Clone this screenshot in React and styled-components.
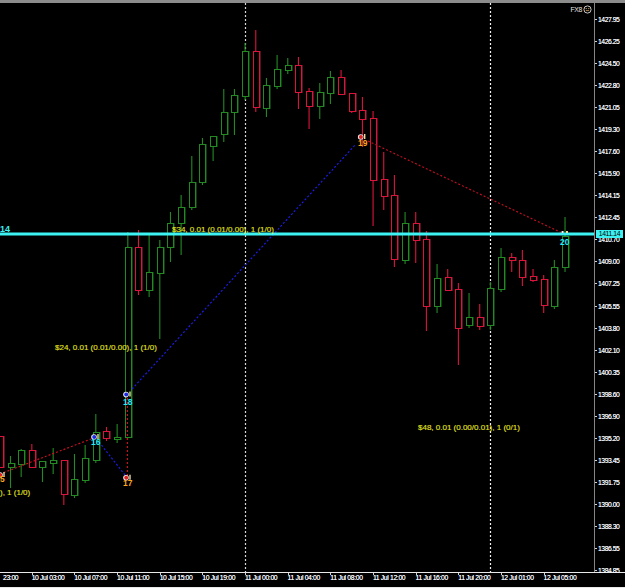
import styled, { createGlobalStyle } from "styled-components";

const GREEN = "#238a23";
const GREEN_DARK = "#0f3a11";
const RED = "#dc143c";
const RED_DARK = "#561022";
const CYAN = "#3df2f2";

const STEP = 10.664;
const FIRST_X = 10.5;

// g / r, wick top, body top, body bottom, wick bottom
const candles = [
  ["r", 436, 436, 467, 467],
  ["g", 456, 463, 467, 488],
  ["g", 449, 450, 464, 477],
  ["r", 444, 450, 467, 468],
  ["g", 461, 461, 467, 482],
  ["g", 448, 460, 463, 474],
  ["r", 460, 460, 494, 505],
  ["g", 454, 479, 495, 498],
  ["g", 445, 458, 480, 483],
  ["g", 414, 432, 460, 463],
  ["r", 427, 431, 438, 441],
  ["g", 424, 437, 439, 443],
  ["g", 232, 247, 437, 437],
  ["r", 230, 247, 290, 295],
  ["g", 235, 272, 290, 297],
  ["g", 240, 247, 273, 339],
  ["g", 212, 223, 247, 262],
  ["g", 195, 207, 223, 255],
  ["g", 156, 182, 207, 210],
  ["g", 138, 144, 182, 185],
  ["g", 136, 136, 146, 161],
  ["g", 89, 112, 134, 142],
  ["g", 89, 95, 112, 135],
  ["g", 43, 51, 96, 100],
  ["r", 30, 51, 107, 112],
  ["g", 78, 85, 108, 117],
  ["g", 55, 69, 86, 89],
  ["g", 58, 65, 70, 74],
  ["r", 57, 65, 92, 109],
  ["r", 88, 91, 106, 129],
  ["g", 83, 92, 106, 119],
  ["g", 71, 77, 93, 104],
  ["r", 70, 77, 94, 95],
  ["r", 93, 93, 111, 113],
  ["r", 97, 110, 119, 147],
  ["r", 111, 118, 180, 226],
  ["r", 152, 179, 196, 210],
  ["r", 175, 195, 259, 267],
  ["g", 212, 223, 260, 264],
  ["r", 212, 223, 240, 263],
  ["r", 231, 239, 306, 331],
  ["g", 264, 278, 306, 313],
  ["r", 269, 277, 290, 290],
  ["r", 283, 289, 328, 365],
  ["g", 293, 317, 325, 328],
  ["r", 304, 317, 326, 330],
  ["g", 282, 288, 325, 330],
  ["g", 248, 257, 289, 292],
  ["r", 253, 257, 260, 272],
  ["r", 250, 260, 277, 286],
  ["r", 269, 276, 280, 282],
  ["r", 275, 279, 305, 313],
  ["g", 260, 267, 306, 309],
  ["g", 217, 236, 267, 272],
];

const prices = [
  "1427.95", "1426.25", "1424.50", "1422.80", "1421.05", "1419.30", "1417.60",
  "1415.90", "1414.15", "1412.45", "1410.70", "1409.00", "1407.25", "1405.55",
  "1403.80", "1402.10", "1400.35", "1398.60", "1396.90", "1395.20", "1393.45",
  "1391.75", "1390.00", "1388.30", "1386.55", "1384.85",
];

const times = [
  "23:00", "10 Jul 03:00", "10 Jul 07:00", "10 Jul 11:00", "10 Jul 15:00",
  "10 Jul 19:00", "11 Jul 00:00", "11 Jul 04:00", "11 Jul 08:00", "11 Jul 12:00",
  "11 Jul 16:00", "11 Jul 20:00", "12 Jul 01:00", "12 Jul 05:00",
];

const GlobalStyle = createGlobalStyle`
  html, body {
    margin: 0;
    background: #000;
    overflow: hidden;
  }
`;

const Terminal = styled.div`
  width: 625px;
  height: 588px;
  background: #000;
  display: flex;
  flex-direction: column;
  font-family: "Liberation Sans", Arial, sans-serif;
`;

const TopBar = styled.div`
  height: 3px;
  flex: none;
  background: #8c8c8c;
`;

const ChartRow = styled.div`
  display: flex;
  height: 569px;
  flex: none;
`;

const ChartPane = styled.div`
  width: 594px;
  flex: none;
  position: relative;
  overflow: hidden;
`;

const ChartSvg = styled.svg`
  display: block;
  width: 594px;
  height: 569px;
`;

const TradeLabel = styled.text`
  font-size: 8px;
  fill: #e6e620;
  stroke: #e6e620;
  stroke-width: 0.12px;
`;

const OrderNumber = styled.text`
  font-size: 8.4px;
  font-weight: bold;
  fill: ${(p) => (p.$buy ? "#25ecfa" : "#ffa51e")};
`;

const LineLabel = styled.text`
  font-size: 9px;
  font-weight: bold;
  fill: ${CYAN};
`;

const Broker = styled.div`
  position: absolute;
  right: 2px;
  top: 2px;
  display: flex;
  align-items: center;
  gap: 1px;
  font-size: 6.8px;
  letter-spacing: -0.3px;
  line-height: 8px;
  color: #e8e4e0;
`;

const PriceAxis = styled.div`
  flex: 1;
  border-left: 1.5px solid #858585;
  padding-top: 5.6px;
  position: relative;
`;

const PriceRow = styled.div`
  height: 22.04px;
  display: flex;
  align-items: center;
  gap: 1px;
  font-size: 6.8px;
  letter-spacing: -0.45px;
  color: #f6f8fa;
  text-shadow: 0 0 0.4px #dfe8ff;

  &::before {
    content: "";
    width: 2px;
    height: 1px;
    background: #d0d0d0;
  }
`;

const PriceTag = styled.div`
  position: absolute;
  left: 1px;
  top: 227px;
  width: 27px;
  height: 8px;
  background: ${CYAN};
  color: #000;
  font-size: 6.8px;
  letter-spacing: -0.4px;
  line-height: 8px;
  text-align: center;
`;

const TimeAxis = styled.div`
  height: 14px;
  flex: none;
  border-top: 1px solid #e8e8e8;
  border-bottom: 1px solid #e8e8e8;
  overflow: hidden;
`;

const TimeTrack = styled.div`
  display: flex;
  height: 14px;
`;

const FirstCell = styled.div`
  flex: 0 0 31.67px;
  padding: 1px 0 0 3px;
  box-sizing: border-box;
  font-size: 6.8px;
  letter-spacing: -0.35px;
  line-height: 8px;
  color: #f6f8fa;
  text-shadow: 0 0 0.4px #dfe8ff;
`;

const TimeCell = styled.div`
  flex: 0 0 42.67px;
  position: relative;
  padding-top: 1px;
  font-size: 6.8px;
  letter-spacing: -0.35px;
  line-height: 8px;
  white-space: nowrap;
  color: #f6f8fa;
  text-shadow: 0 0 0.4px #dfe8ff;

  &::before {
    content: "";
    position: absolute;
    left: 0;
    top: 0;
    width: 1px;
    height: 2px;
    background: #d0d0d0;
  }
`;

function Candle({ index, kind, wickTop, bodyTop, bodyBottom, wickBottom }) {
  const x = FIRST_X + (index - 1) * STEP;
  const left = Math.round(x - 3) + 0.5;
  const color = kind === "g" ? GREEN : RED;
  const dark = kind === "g" ? GREEN_DARK : RED_DARK;
  return (
    <g>
      <line x1={x} x2={x} y1={wickTop} y2={wickBottom} stroke={color} strokeWidth={1.1} />
      <rect x={left} y={bodyTop + 0.5} width={6} height={bodyBottom - bodyTop} fill="#000" stroke={color} />
      <line x1={left + 7} x2={left + 7} y1={bodyTop} y2={bodyBottom + 1} stroke={dark} />
    </g>
  );
}

function Marker({ x, y, color }) {
  return (
    <g>
      <circle cx={x} cy={y} r={2.8} fill="#eef0f4" />
      <circle cx={x + 0.2} cy={y} r={2} fill={color} />
      <line x1={x + 4} x2={x + 4} y1={y - 3} y2={y + 2} stroke="#f0dca0" strokeWidth={1.4} />
    </g>
  );
}

function Dotted({ x1, y1, x2, y2, color }) {
  return <line x1={x1} y1={y1} x2={x2} y2={y2} stroke={color} strokeWidth={1.2} strokeDasharray="2 2" />;
}

function Chart() {
  return (
    <ChartSvg viewBox="0 3 594 569">
      <Dotted x1={245.5} y1={3} x2={245.5} y2={572} color="#d8d8d8" />
      <Dotted x1={490.5} y1={3} x2={490.5} y2={572} color="#f0f0f0" />
      {candles.map((c, i) => (
        <Candle key={i} index={i} kind={c[0]} wickTop={c[1]} bodyTop={c[2]} bodyBottom={c[3]} wickBottom={c[4]} />
      ))}
      <Dotted x1={132} y1={389} x2={356} y2={144} color="#1c1ce8" />
      <Dotted x1={99} y1={442} x2={125} y2={475} color="#1c1ce8" />
      <Dotted x1={0} y1={474} x2={91} y2={439} color="#c81020" />
      <Dotted x1={127.4} y1={398} x2={127.4} y2={476} color="#c81020" />
      <Dotted x1={368} y1={141} x2={562} y2={233} color="#b81020" />
      <rect x={0} y={232.5} width={594} height={3} fill={CYAN} />
      <Marker x={0} y={475} color="#e02020" />
      <Marker x={94} y={437} color="#1a2ae0" />
      <Marker x={126} y={394.6} color="#1a2ae0" />
      <Marker x={126} y={477.7} color="#e02020" />
      <Marker x={360.7} y={137} color="#e02020" />
      <line x1={562.6} x2={562.6} y1={231} y2={233} stroke="#e8f0f0" strokeWidth={2} />
      <line x1={567} x2={567} y1={231} y2={233} stroke="#f0dca0" strokeWidth={2} />
      <LineLabel x={0} y={232}>14</LineLabel>
      <TradeLabel x={172} y={232}>$34, 0.01 (0.01/0.00), 1 (1/0)</TradeLabel>
      <TradeLabel x={55} y={350}>$24, 0.01 (0.01/0.00), 1 (1/0)</TradeLabel>
      <TradeLabel x={418} y={430}>$48, 0.01 (0.00/0.01), 1 (0/1)</TradeLabel>
      <TradeLabel x={0} y={495}>), 1 (1/0)</TradeLabel>
      <OrderNumber x={0} y={482}>5</OrderNumber>
      <OrderNumber x={91} y={445} $buy>16</OrderNumber>
      <OrderNumber x={123} y={486}>17</OrderNumber>
      <OrderNumber x={123} y={404.5} $buy>18</OrderNumber>
      <OrderNumber x={358} y={146}>19</OrderNumber>
      <OrderNumber x={560} y={244.5} $buy>20</OrderNumber>
    </ChartSvg>
  );
}

function App() {
  return (
    <Terminal>
      <GlobalStyle />
      <TopBar />
      <ChartRow>
        <ChartPane>
          <Chart />
          <Broker>
            FX8
            <svg width="9" height="9" viewBox="0 0 9 9">
              <circle cx="4.5" cy="4.5" r="3.6" fill="none" stroke="#c8c8c8" />
              <circle cx="3.2" cy="3.6" r="0.6" fill="#e0c070" />
              <circle cx="5.8" cy="3.6" r="0.6" fill="#e0c070" />
              <path d="M2.8 5.6h3.4" stroke="#d8a060" strokeWidth="0.8" />
            </svg>
          </Broker>
        </ChartPane>
        <PriceAxis>
          {prices.map((price) => (
            <PriceRow key={price}>{price}</PriceRow>
          ))}
          <PriceTag>1411.14</PriceTag>
        </PriceAxis>
      </ChartRow>
      <TimeAxis>
        <TimeTrack>
          <FirstCell>{times[0]}</FirstCell>
          {times.slice(1).map((time) => (
            <TimeCell key={time}>{time}</TimeCell>
          ))}
        </TimeTrack>
      </TimeAxis>
    </Terminal>
  );
}

export default App;
